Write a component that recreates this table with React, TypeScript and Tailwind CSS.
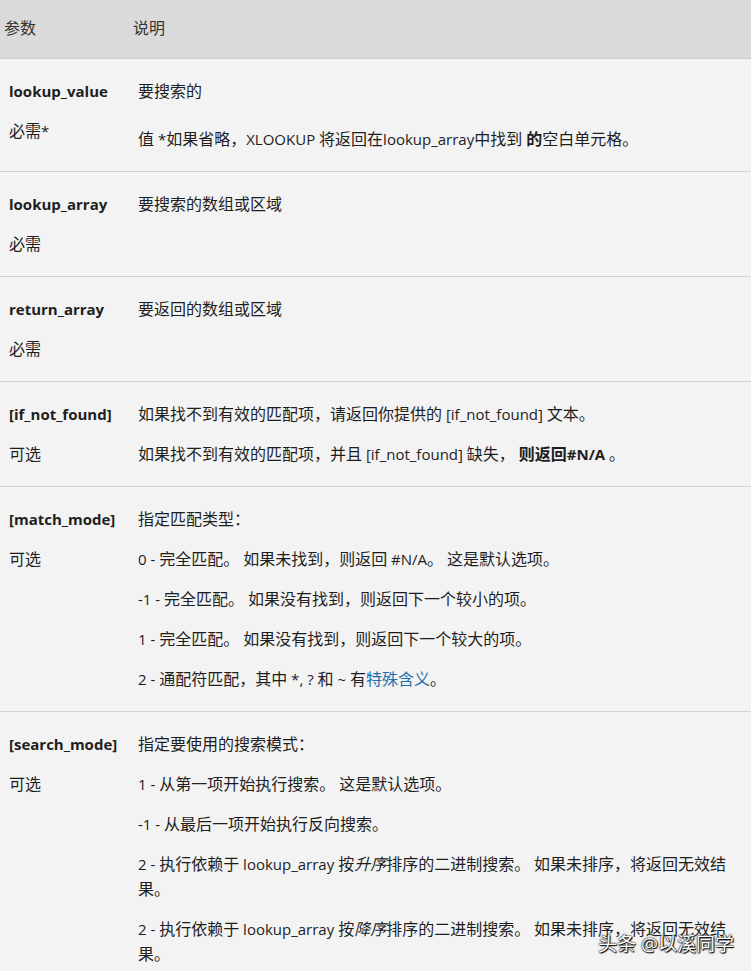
import type { ReactNode } from 'react';

// Latin runs are set a bit smaller than CJK so widths match the original (Segoe UI + YaHei)
function m(s: string): ReactNode[] {
  return s.split(/([\u0000-\u024f]+)/).map((part, i) =>
    /^[\u0000-\u024f]+$/.test(part) ? (
      <span key={i} className="text-[15px]">
        {part}
      </span>
    ) : (
      part
    )
  );
}

interface Row {
  name: string;
  need: string;
  desc: ReactNode[];
  firstGap?: boolean;
}

const rows: Row[] = [
  {
    name: 'lookup_value',
    need: '必需*',
    firstGap: true,
    desc: [
      m('要搜索的'),
      <>
        {m('值 *如果省略，XLOOKUP 将返回在lookup_array中找到 ')}
        <b className="font-bold">的</b>
        {m('空白单元格。')}
      </>,
    ],
  },
  { name: 'lookup_array', need: '必需', desc: [m('要搜索的数组或区域')] },
  { name: 'return_array', need: '必需', desc: [m('要返回的数组或区域')] },
  {
    name: '[if_not_found]',
    need: '可选',
    desc: [
      m('如果找不到有效的匹配项，请返回你提供的 [if_not_found] 文本。'),
      <>
        {m('如果找不到有效的匹配项，并且 [if_not_found] 缺失， ')}
        <b className="font-bold">{m('则返回#N/A')}</b>
        {m(' 。')}
      </>,
    ],
  },
  {
    name: '[match_mode]',
    need: '可选',
    desc: [
      m('指定匹配类型：'),
      m('0 - 完全匹配。 如果未找到，则返回 #N/A。 这是默认选项。'),
      m('-1 - 完全匹配。 如果没有找到，则返回下一个较小的项。'),
      m('1 - 完全匹配。 如果没有找到，则返回下一个较大的项。'),
      <>
        {m('2 - 通配符匹配，其中 *, ? 和 ~ 有')}
        <span className="text-[#1d6fb0]">特殊含义</span>。
      </>,
    ],
  },
  {
    name: '[search_mode]',
    need: '可选',
    desc: [
      m('指定要使用的搜索模式：'),
      m('1 - 从第一项开始执行搜索。 这是默认选项。'),
      m('-1 - 从最后一项开始执行反向搜索。'),
      <>
        {m('2 - 执行依赖于 lookup_array 按')}
        <i className="italic">升序</i>
        {m('排序的二进制搜索。 如果未排序，将返回无效结果。')}
      </>,
      <>
        {m('2 - 执行依赖于 lookup_array 按')}
        <i className="italic">降序</i>
        {m('排序的二进制搜索。 如果未排序，将返回无效结果。')}
      </>,
    ],
  },
];

export default function App() {
  return (
    <div
      className="relative h-[971px] w-[751px] overflow-hidden bg-[#f3f3f3] text-[16px] leading-[25px] text-[#1e1e1e]"
      style={{ fontFamily: '"Open Sans", "Noto Sans CJK SC", sans-serif' }}
    >
      <div className="grid h-[59px] grid-cols-[129px_1fr] items-center border-b border-[#cfcfcf] bg-[#dadada] pb-[2px] text-[#333]">
        <div className="pl-[4px]">参数</div>
        <div className="pl-[4px]">说明</div>
      </div>

      {rows.map((row) => (
        <div key={row.name} className="grid grid-cols-[129px_1fr] border-b border-[#d2d2d2] pt-[20px] pb-[19px]">
          <div className="pl-[9px]">
            <div className="text-[15px] font-bold">{row.name}</div>
            <div className="mt-[15px]">{m(row.need)}</div>
          </div>
          <div className="pl-[9px] pr-[12px]">
            {row.desc.map((d, i) => (
              <p key={i} className={i === 0 ? '' : i === 1 && row.firstGap ? 'mt-[23px]' : 'mt-[15px]'}>
                {d}
              </p>
            ))}
          </div>
        </div>
      ))}

      <div
        className="absolute left-[598px] top-[930px] text-[19px] leading-[28px] text-white"
        style={{ textShadow: '0 0 2px #000, 0 0 1px #000, 1px 1px 1px #000' }}
      >
        头条 @以溪同学
      </div>
    </div>
  );
}
